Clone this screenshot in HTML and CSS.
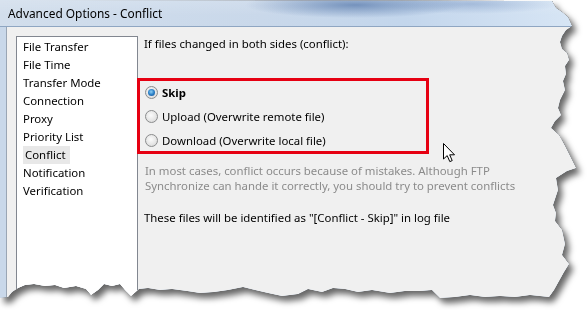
FILE: index.html
```html
<!DOCTYPE html>
<html>
<head>
    <title>Advanced Options - Conflict</title>
    <link rel="stylesheet" href="styles.css">
</head>
<body>
    <div class="shot">
        <div class="paper">
            <div class="window">
                <div class="titlebar">Advanced Options - Conflict</div>
                <div class="frame">
                    <div class="dialog">
                        <ul class="nav">
                            <li>File Transfer</li>
                            <li>File Time</li>
                            <li>Transfer Mode</li>
                            <li>Connection</li>
                            <li>Proxy</li>
                            <li>Priority List</li>
                            <li><span class="current">Conflict</span></li>
                            <li>Notification</li>
                            <li>Verification</li>
                        </ul>

                        <div class="panel">
                            <p class="question">If files changed in both sides (conflict):</p>

                            <div class="choices">
                                <div class="choice"><span class="radio checked"></span><b>Skip</b></div>
                                <div class="choice"><span class="radio"></span>Upload (Overwrite remote file)</div>
                                <div class="choice"><span class="radio"></span>Download (Overwrite local file)</div>
                            </div>

                            <p class="hint">In most cases, conflict occurs because of mistakes. Although FTP<br>Synchronize can hande it correctly, you should try to prevent conflicts</p>

                            <p class="log">These files will be identified as "[Conflict - Skip]" in log file</p>
                        </div>
                    </div>
                </div>
            </div>
        </div>

        <!-- mouse pointer -->
        <svg class="cursor" width="13" height="20" viewBox="0 0 13 20">
            <path d="M0.5 0.5 L0.5 16 L4.2 12.6 L6.8 18.6 L9.2 17.6 L6.7 11.8 L11.5 11.8 Z" fill="#fff" stroke="#000" stroke-width="1" stroke-linejoin="round"/>
        </svg>
    </div>
</body>
</html>
```

FILE: styles.css
```css
body {
    margin: 0;
    background-color: #fff;
    font-family: "Noto Sans", "Open Sans", sans-serif;
    font-size: 11.4px;
    color: #000;
}

.shot {
    position: relative;
    width: 588px;
    height: 310px;
    overflow: hidden;
}

/* outline + soft shadow round the torn edge */
.paper {
    width: 580px;
    height: 300px;
    filter: drop-shadow(0 0 0.6px #000) drop-shadow(4px 5px 3px rgba(0, 0, 0, 0.6));
}

.window {
    width: 580px;
    height: 300px;
    background-color: #f0f0f0;
    overflow: hidden;
    clip-path: polygon(0 0, 552px 1px, 556px 8px, 562px 12px, 568px 17px, 572px 26px, 566px 30px, 562px 36px, 560px 42px, 562px 49px, 567px 53px, 569px 60px, 565px 66px, 566px 74px, 563px 81px, 565px 90px, 560px 100px, 558px 108px, 561px 115px, 555px 121px, 551px 128px, 559px 135px, 565px 146px, 576px 168px, 567px 171px, 556px 178px, 558px 190px, 553px 205px, 556px 213px, 555px 221px, 562px 230px, 565px 244px, 562px 255px, 569px 264px, 564px 272px, 559px 281px, 554px 290px, 549px 297px, 530px 295px, 515px 297px, 500px 296px, 485px 297px, 470px 295px, 455px 297px, 440px 298px, 432px 290px, 420px 291px, 405px 291px, 390px 293px, 372px 290px, 358px 292px, 345px 289px, 333px 288px, 322px 292px, 308px 289px, 298px 294px, 282px 296px, 268px 293px, 255px 290px, 243px 287px, 228px 290px, 214px 292px, 200px 293px, 187px 291px, 172px 289px, 160px 290px, 148px 288px, 139px 289px, 131px 296px, 125px 290px, 120px 284px, 112px 286px, 104px 284px, 98px 290px, 91px 295px, 86px 289px, 76px 286px, 64px 288px, 55px 285px, 45px 286px, 34px 284px, 25px 285px, 18px 288px, 12px 292px, 8px 297px, 0 298px);
}

.titlebar {
    height: 27px;
    box-sizing: border-box;
    padding-left: 8px;
    line-height: 26px;
    font-size: 11.9px;
    color: #000;
    border-bottom: 1px solid #8fa6c2;
    background:
        radial-gradient(ellipse 110px 13px at 355px 5px, rgba(88, 122, 172, 0.75), rgba(88, 122, 172, 0) 100%),
        radial-gradient(ellipse 90px 10px at 470px 4px, rgba(120, 150, 195, 0.5), rgba(120, 150, 195, 0) 100%),
        linear-gradient(to bottom, rgba(255, 255, 255, 0.15), rgba(255, 255, 255, 0) 60%),
        linear-gradient(to right, #d2deec, #c9d8ea 45%, #c3d6ec 70%, #d8e6f5);
}

.frame {
    display: flex;
    height: 273px;
    background-color: #c9d8ea;
    padding-left: 6px;
}

.dialog {
    flex: 1;
    display: flex;
    align-items: flex-start;
    background-color: #f0f0f0;
    border-left: 1px solid #9aa6b5;
    padding: 9px 0 0 9px;
}

.nav {
    list-style: none;
    margin: 0;
    padding: 1px 0 0 0;
    width: 120px;
    height: 262px;
    background-color: #fff;
    border: 1px solid #828790;
}

.nav li {
    height: 18px;
    line-height: 18px;
    padding-left: 4px;
    text-indent: 2px;
}

.current {
    display: inline-block;
    background-color: #e8e8e8;
    padding-right: 4px;
}

.panel {
    margin-left: 6px;
}

.question {
    margin: 0;
    line-height: 16px;
}

.choices {
    margin: 26px 0 0 -7px;
    width: 281px;
    border: 3px solid #e60012;
    padding-left: 5px;
    display: flex;
    flex-direction: column;
    gap: 2px;
}

.choice {
    display: flex;
    align-items: center;
    gap: 4px;
    height: 22px;
}

.choice b {
    font-weight: bold;
}

.radio {
    width: 11px;
    height: 11px;
    border-radius: 50%;
    border: 1px solid #8b8c8d;
    background: radial-gradient(circle at 45% 40%, #fbfbfb 0, #e6e6e6 55%, #cfd0d1 100%);
    position: relative;
}

.radio.checked::after {
    content: "";
    position: absolute;
    left: 2px;
    top: 2px;
    width: 7px;
    height: 7px;
    border-radius: 50%;
    background: radial-gradient(circle at 45% 40%, #8fd0f6 0, #2a7fc6 50%, #1a4f8c 100%);
}

.hint {
    margin: 9px 0 0 1px;
    line-height: 15px;
    color: #8b8b8b;
}

.log {
    margin: 17px 0 0 0;
    line-height: 16px;
}

.cursor {
    position: absolute;
    left: 443px;
    top: 143px;
}
```
